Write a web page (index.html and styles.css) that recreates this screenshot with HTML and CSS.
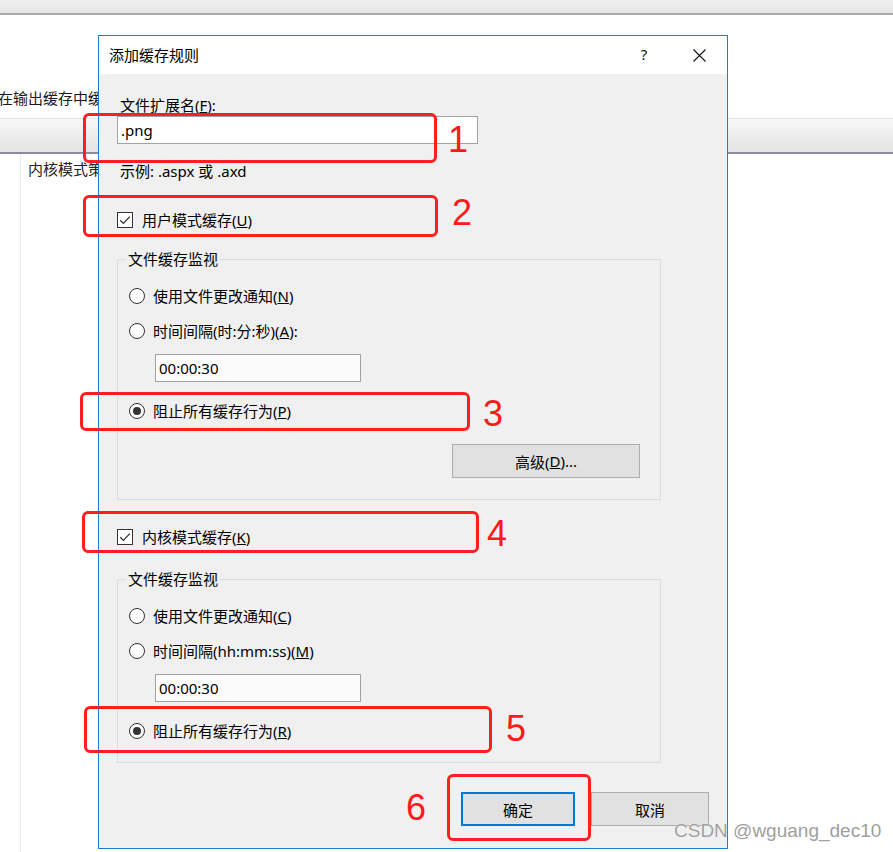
FILE: index.html
```html
<!DOCTYPE html>
<html lang="zh-CN">
<head>
<meta charset="utf-8">
<title>添加缓存规则</title>
<link rel="stylesheet" href="styles.css">
</head>
<body>
<div class="app">
  <div class="app-top"></div>
  <div class="app-desc">在输出缓存中缓</div>
  <div class="app-header"></div>
  <div class="app-list">
    <div class="app-row">内核模式策</div>
  </div>
</div>

<div class="dialog">
  <div class="titlebar">
    <div class="title">添加缓存规则</div>
    <div class="tb-btn help">?</div>
    <div class="tb-btn close">
      <svg width="13" height="13" viewBox="0 0 13 13"><path d="M0.5 0.5 L12.5 12.5 M12.5 0.5 L0.5 12.5" stroke="#111" stroke-width="1.1" fill="none"/></svg>
    </div>
  </div>
  <div class="dlg-body">
    <div class="label">文件扩展名(<u>F</u>):</div>
    <div class="textbox ext">.png</div>
    <div class="label hint">示例: .aspx 或 .axd</div>

    <div class="check-row first">
      <span class="checkbox"><svg width="14" height="14" viewBox="0 0 14 14"><path d="M2.2 7.2 L5.4 10.4 L11.8 3.6" stroke="#333" stroke-width="1.3" fill="none"/></svg></span>
      <span>用户模式缓存(<u>U</u>)</span>
    </div>

    <fieldset class="group g1">
      <legend>文件缓存监视</legend>
      <div class="opt"><span class="radio"></span><span>使用文件更改通知(<u>N</u>)</span></div>
      <div class="opt next"><span class="radio"></span><span>时间间隔(时:分:秒)(<u>A</u>):</span></div>
      <div class="textbox time">00:00:30</div>
      <div class="opt last"><span class="radio on"></span><span>阻止所有缓存行为(<u>P</u>)</span></div>
      <div class="adv-row"><div class="btn adv">高级(<u>D</u>)...</div></div>
    </fieldset>

    <div class="check-row second">
      <span class="checkbox"><svg width="14" height="14" viewBox="0 0 14 14"><path d="M2.2 7.2 L5.4 10.4 L11.8 3.6" stroke="#333" stroke-width="1.3" fill="none"/></svg></span>
      <span>内核模式缓存(<u>K</u>)</span>
    </div>

    <fieldset class="group g2">
      <legend>文件缓存监视</legend>
      <div class="opt"><span class="radio"></span><span>使用文件更改通知(<u>C</u>)</span></div>
      <div class="opt next"><span class="radio"></span><span>时间间隔(hh:mm:ss)(<u>M</u>)</span></div>
      <div class="textbox time">00:00:30</div>
      <div class="opt last"><span class="radio on"></span><span>阻止所有缓存行为(<u>R</u>)</span></div>
    </fieldset>

    <div class="btn-row">
      <div class="btn ok">确定</div>
      <div class="btn cancel">取消</div>
    </div>
  </div>
</div>

<div class="mark m1"></div>
<div class="mark m2"></div>
<div class="mark m3"></div>
<div class="mark m4"></div>
<div class="mark m5"></div>
<div class="mark m6"></div>
<div class="num n1">1</div>
<div class="num n2">2</div>
<div class="num n3">3</div>
<div class="num n4">4</div>
<div class="num n5">5</div>
<div class="num n6">6</div>

<div class="watermark">CSDN @wguang_dec10</div>
</body>
</html>
```

FILE: styles.css
```css
html, body {
  margin: 0;
  padding: 0;
}
body {
  width: 893px;
  height: 852px;
  overflow: hidden;
  background: #ffffff;
  position: relative;
  font-family: "Noto Sans", "Noto Sans CJK SC", sans-serif;
  font-size: 15px;
  color: #000;
}

/* background application window */
.app {
  height: 852px;
  display: flex;
  flex-direction: column;
}
.app-top {
  height: 13px;
  background: linear-gradient(#efefef, #e6e6e6);
  border-bottom: 2px solid #ababab;
}
.app-desc {
  margin-top: 73px;
  margin-left: -2px;
  line-height: 20px;
  white-space: nowrap;
  color: #1a1a1a;
}
.app-header {
  margin-top: 10px;
  height: 33px;
  border-top: 1px solid #e4e4e4;
  border-bottom: 2px solid #8a8aa3;
  background: linear-gradient(#f8f8f8, #e3e3e3);
}
.app-list {
  flex: 1;
  margin-left: 20px;
  border-left: 1px solid #e8eef5;
  padding-top: 5px;
}
.app-row {
  padding-left: 7px;
  line-height: 20px;
  color: #222;
  white-space: nowrap;
}

/* dialog */
.dialog {
  position: absolute;
  left: 98px;
  top: 35px;
  width: 630px;
  height: 814px;
  box-sizing: border-box;
  border: 1px solid #1a7fd4;
  background: #f0f0f0;
  display: flex;
  flex-direction: column;
}
.titlebar {
  height: 38px;
  background: #ffffff;
  display: flex;
  align-items: center;
  padding-left: 10px;
  padding-right: 5px;
}
.title {
  flex: 1;
  line-height: 20px;
}
.tb-btn {
  width: 46px;
  height: 38px;
  display: flex;
  align-items: center;
  justify-content: center;
}
.help {
  font-size: 15px;
  color: #111;
  padding-bottom: 2px;
  box-sizing: border-box;
  margin-right: 9px;
}
.dlg-body {
  flex: 1;
  padding: 21px 18px 0 18px;
}
.label {
  line-height: 20px;
  padding-left: 3px;
}
.hint {
  margin-top: 17px;
}
.textbox {
  box-sizing: border-box;
  height: 28px;
  line-height: 26px;
  border: 1px solid #a2a2a2;
  background: #ffffff;
  padding-left: 3px;
}
.ext {
  width: 361px;
  margin-top: 1px;
}
.time {
  width: 206px;
  margin-left: 26px;
  margin-top: 13px;
  background: #fbfbfb;
}

.check-row {
  display: flex;
  align-items: center;
  gap: 9px;
  height: 20px;
  line-height: 20px;
}
.check-row.first { margin-top: 29px; }
.check-row.second { margin-top: 27px; }
.checkbox {
  width: 16px;
  height: 16px;
  box-sizing: border-box;
  border: 1px solid #333;
  background: #ffffff;
  display: flex;
  align-items: center;
  justify-content: center;
}

.group {
  width: 544px;
  box-sizing: border-box;
  margin: 19px 0 0 0;
  padding: 17px 20px 21px 11px;
  border: 1px solid #dcdcdc;
  min-inline-size: 0;
}
.group.g2 { margin-top: 22px; }
.group legend {
  padding: 0 2px;
  margin-left: -3px;
  line-height: 20px;
}
.opt {
  display: flex;
  align-items: center;
  gap: 8px;
  height: 20px;
  line-height: 20px;
}
.opt.next { margin-top: 15px; }
.opt.last { margin-top: 19px; }
.radio {
  width: 16px;
  height: 16px;
  box-sizing: border-box;
  border: 1px solid #333;
  border-radius: 50%;
  background: #ffffff;
  display: flex;
  align-items: center;
  justify-content: center;
}
.radio.on::after {
  content: "";
  width: 8px;
  height: 8px;
  border-radius: 50%;
  background: #333;
}

.adv-row {
  display: flex;
  justify-content: flex-end;
  margin-top: 23px;
}
.btn {
  box-sizing: border-box;
  height: 34px;
  display: flex;
  align-items: center;
  justify-content: center;
  background: #e1e1e1;
  border: 1px solid #adadad;
}
.adv { width: 188px; }
.btn-row {
  display: flex;
  justify-content: flex-end;
  gap: 16px;
  margin-top: 29px;
}
.ok {
  width: 114px;
  border: 2px solid #0078d7;
}
.cancel { width: 118px; }

/* red annotations */
.mark {
  position: absolute;
  box-sizing: border-box;
  border: 3px solid #ff1f1f;
  border-radius: 6px;
}
.m1 { left: 83px; top: 113px; width: 354px; height: 50px; }
.m2 { left: 83px; top: 195px; width: 355px; height: 42px; }
.m3 { left: 80px; top: 392px; width: 390px; height: 39px; }
.m4 { left: 82px; top: 511px; width: 397px; height: 42px; }
.m5 { left: 84px; top: 706px; width: 408px; height: 47px; }
.m6 { left: 447px; top: 774px; width: 144px; height: 67px; }

.num {
  position: absolute;
  width: 30px;
  text-align: center;
  font-family: "Liberation Sans", sans-serif;
  font-size: 36px;
  line-height: 36px;
  color: #ff1a1a;
}
.n1 { left: 443px; top: 122px; }
.n2 { left: 447px; top: 195px; }
.n3 { left: 478px; top: 396px; }
.n4 { left: 482px; top: 516px; }
.n5 { left: 501px; top: 711px; }
.n6 { left: 401px; top: 790px; }

.watermark {
  position: absolute;
  left: 674px;
  top: 821px;
  font-family: "Liberation Sans", sans-serif;
  font-size: 19px;
  line-height: 19px;
  color: #a0a0a0;
  white-space: nowrap;
  text-shadow: 0 0 1px #ffffff, 0 0 1px #ffffff;
}
```
